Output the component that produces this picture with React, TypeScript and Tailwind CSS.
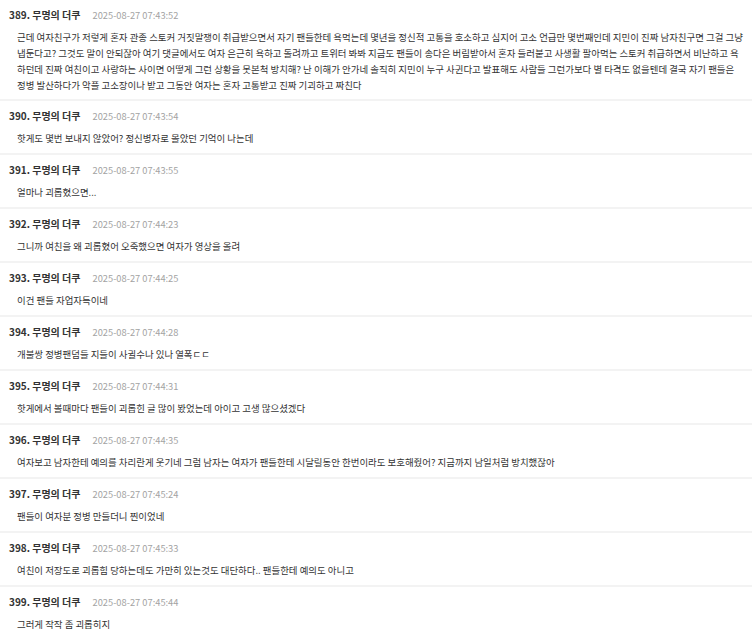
import React from "react";

type Comment = { no: number; date: string; lines: string[] };

const comments: Comment[] = [
  {
    no: 389,
    date: "2025-08-27 07:43:52",
    lines: [
      "근데 여자친구가 저렇게 혼자 관종 스토커 거짓말쟁이 취급받으면서 자기 팬들한테 욕먹는데 몇년을 정신적 고통을 호소하고 심지어 고소 언급만 몇번째인데 지민이 진짜 남자친구면 그걸 그냥",
      "냅둔다고? 그것도 말이 안되잖아 여기 댓글에서도 여자 은근히 욕하고 돌려까고 트위터 봐봐 지금도 팬들이 송다은 버림받아서 혼자 들러붙고 사생활 팔아먹는 스토커 취급하면서 비난하고 욕",
      "하던데 진짜 여친이고 사랑하는 사이면 어떻게 그런 상황을 못본척 방치해? 난 이해가 안가네 솔직히 지민이 누구 사귄다고 발표해도 사람들 그런가보다 별 타격도 없을텐데 결국 자기 팬들은",
      "정병 발산하다가 악플 고소장이나 받고 그동안 여자는 혼자 고통받고 진짜 기괴하고 짜친다",
    ],
  },
  { no: 390, date: "2025-08-27 07:43:54", lines: ["핫게도 몇번 보내지 않았어? 정신병자로 몰았던 기억이 나는데"] },
  { no: 391, date: "2025-08-27 07:43:55", lines: ["얼마나 괴롭혔으면..."] },
  { no: 392, date: "2025-08-27 07:44:23", lines: ["그니까 여친을 왜 괴롭혔어 오죽했으면 여자가 영상을 올려"] },
  { no: 393, date: "2025-08-27 07:44:25", lines: ["이건 팬들 자업자득이네"] },
  { no: 394, date: "2025-08-27 07:44:28", lines: ["개불쌍 정병팬덤들 지들이 사귈수나 있나 열폭ㄷㄷ"] },
  { no: 395, date: "2025-08-27 07:44:31", lines: ["핫게에서 볼때마다 팬들이 괴롭힌 글 많이 봤었는데 아이고 고생 많으셨겠다"] },
  {
    no: 396,
    date: "2025-08-27 07:44:35",
    lines: [
      "여자보고 남자한테 예의를 차리란게 웃기네 그럼 남자는 여자가 팬들한테 시달릴동안 한번이라도 보호해줬어? 지금까지 남일처럼 방치했잖아",
    ],
  },
  { no: 397, date: "2025-08-27 07:45:24", lines: ["팬들이 여자분 정병 만들더니 찐이었네"] },
  { no: 398, date: "2025-08-27 07:45:33", lines: ["여친이 저장도로 괴롭힘 당하는데도 가만히 있는것도 대단하다.. 팬들한테 예의도 아니고"] },
  { no: 399, date: "2025-08-27 07:45:44", lines: ["그러게 작작 좀 괴롭히지"] },
];

export default function App() {
  return (
    <div
      className="w-[752px] h-[640px] overflow-hidden bg-white"
      style={{ fontFamily: '"Noto Sans CJK KR", "Noto Sans", sans-serif' }}
    >
      {comments.map((c, i) => (
        <div
          key={c.no}
          className={
            i === 0
              ? "pt-[8px] pb-[6px]"
              : "border-t-2 border-[#f3f3f3] pt-[8px] pb-[7px]"
          }
        >
          <div className="flex items-center h-[14px] pl-[9px]">
            <span className="text-[10px] font-bold text-[#333333] leading-[14px]">
              {c.no}. 무명의 더쿠
            </span>
            <span className="ml-[12px] text-[9.3px] text-[#a3a3a3] leading-[14px]">
              {c.date}
            </span>
          </div>
          <div className="mt-[7px] pl-[17px] pr-[4px] text-[9.45px] leading-[16px] text-[#333333]">
            {c.lines.map((l, j) => (
              <p key={j} className="whitespace-nowrap">
                {l}
              </p>
            ))}
          </div>
        </div>
      ))}
    </div>
  );
}
